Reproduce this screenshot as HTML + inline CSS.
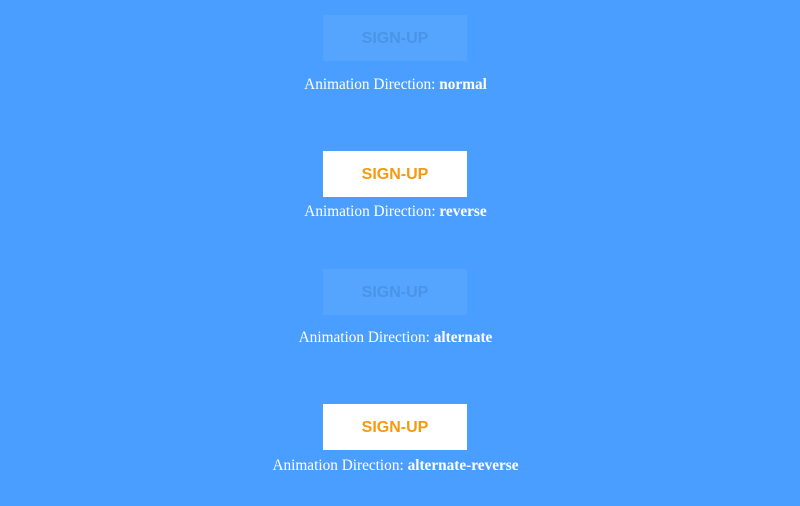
<!DOCTYPE html>
<html><head><style>
html,body{margin:0;padding:0;width:800px;height:506px;background:#4a9eff;overflow:hidden}
.b{position:absolute;left:323px;width:144px;height:46px;background:#fff;color:#f7990c;font:bold 16px "Liberation Sans",sans-serif;text-align:center;line-height:47px}
.f{background:#55a5ff;color:#4a94e8}
.l{position:absolute;left:0;width:791px;text-align:center;color:#fff;font:15.3px "Liberation Serif",serif}
</style></head><body>
<div class="b f" style="top:15px">SIGN-UP</div>
<div class="l" style="top:76px">Animation Direction: <b>normal</b></div>
<div class="b" style="top:151px">SIGN-UP</div>
<div class="l" style="top:203px">Animation Direction: <b>reverse</b></div>
<div class="b f" style="top:269px">SIGN-UP</div>
<div class="l" style="top:329px">Animation Direction: <b>alternate</b></div>
<div class="b" style="top:404px">SIGN-UP</div>
<div class="l" style="top:457px">Animation Direction: <b>alternate-reverse</b></div>
</body></html>
